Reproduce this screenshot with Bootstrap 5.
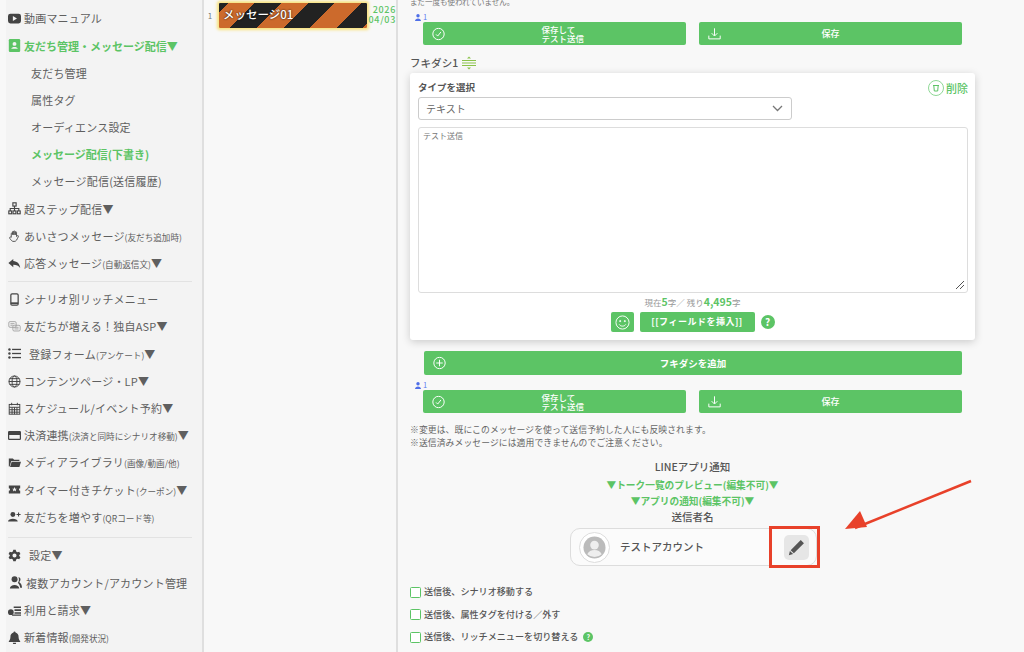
<!DOCTYPE html>
<html lang="ja"><head><meta charset="utf-8">
<link href="https://cdn.jsdelivr.net/npm/bootstrap@5.3.0/dist/css/bootstrap.min.css" rel="stylesheet">
<style>
html,body{height:652px;overflow:hidden;background:#f8f8f8}
body{font-family:"Noto Sans CJK JP","Liberation Sans",sans-serif;color:#555;font-size:11px;position:relative}
.shell{height:652px;overflow:hidden}
.side{flex:none;background:#f3f3f3;border-right:2px solid #dfdfdf;margin-left:6px;width:198px;padding-top:5px}
.mi{height:27.2px;display:flex;align-items:center;font-size:11px;color:#5f5f5f;white-space:nowrap;gap:3px;letter-spacing:.2px}
.mi svg{width:13px;height:13px;flex:none;margin-left:2px;fill:#444}
.mi small{font-size:8.6px;letter-spacing:0}
.mi.sub{padding-left:25px}
.mi.gr{letter-spacing:0;color:#5cc465}
.gr{color:#5cc465;font-weight:700}
.sep{border-top:1px solid #e2e2e2;margin:4px 0 4px 2px;width:184px}
.sep.lower{margin-top:6.5px}
.mid{width:194px;flex:none;border-right:2px solid #dfdfdf;background:#f8f8f8;padding-top:3px}
.mnum{width:12px;text-align:center;font-size:8px;color:#777;margin-right:3px;padding-top:7px}
.stripe{width:148px;height:25px;border-radius:1px;box-shadow:0 0 3px 2px #f8e27e;background:repeating-linear-gradient(135deg,#222 -12.4px 6.4px,#cc6a2c 6.4px 25.3px);color:#fff;font-size:11.5px;font-weight:500;padding:3px 0 0 4px;text-shadow:0 0 2px #000}
.mdate{font-size:9px;line-height:10px;color:#5cc465;font-weight:500;padding-top:2px;text-align:right;width:29px;letter-spacing:.7px;white-space:nowrap}
.mainc{flex:1;min-width:0;padding-left:12px;position:relative}
.topnote{font-size:7.5px;height:4px;line-height:3px;color:#777;display:flex;width:565px}
.cnt{font-size:7.5px;height:10px;line-height:10px;color:#5a7af0;padding-left:5px;display:flex;align-items:center;gap:2px}
.btnrow{display:flex;gap:13px;padding-left:13px;width:565px}
.gbtn{background:#5cc465;border:0;border-radius:2px;color:#fff;height:23px;width:263px;display:flex;align-items:center;justify-content:center;position:relative;font-size:9px;line-height:9px;font-weight:500;padding:0;text-align:center}
.gbtn svg{position:absolute;left:9px;top:50%;transform:translateY(-50%);width:13px;height:13px;fill:none;stroke:#fff;stroke-width:1.2}
.gbtn .ctext{width:44px;text-align:left;margin-left:18px;font-size:8.5px}
.flabel{font-size:10.5px;font-weight:500;color:#555;height:28px;display:flex;align-items:center;gap:3px;padding-top:8px;line-height:1}
.panel{width:565px;height:267px;background:#fff;border-radius:3px;box-shadow:0 2px 8px rgba(0,0,0,.18);padding:8px;position:relative}
.plabel{font-size:9.5px;font-weight:700;color:#555;line-height:12px;margin-bottom:4px}
.sel{width:374px;height:23px;border:1px solid #ccc;border-radius:3px;font-size:10px;color:#666;padding:0 8px 0 7px;display:flex;align-items:center;justify-content:space-between;background:#fff}
.ta{width:550px;height:166px;border:1px solid #ddd;border-radius:3px;margin-top:7px;font-size:8px;color:#777;padding:1px 4px;position:relative;line-height:14px}
.grip{position:absolute;right:2px;bottom:2px;width:10px;height:10px}
.del{position:absolute;right:7px;top:7px;display:flex;align-items:center;gap:2px;color:#5cc465;font-size:11px;font-weight:500}
.ccount{text-align:center;font-size:8.5px;color:#999;height:19px;line-height:18px}
.ccount b{font-size:10.5px;color:#5cc465;font-weight:700}
.tools{display:flex;justify-content:center;gap:6px;align-items:center}
.tsmile{width:23px;height:20px;background:#5cc465;border-radius:2px;display:flex;align-items:center;justify-content:center}
.tfield{width:115px;height:20px;background:#5cc465;border-radius:2px;color:#fff;font-size:9px;font-weight:700;text-align:center;line-height:20px;letter-spacing:.5px}
.qm{width:14px;height:14px;border-radius:50%;background:#5cc465;color:#fff;font-size:10px;font-weight:700;line-height:14px;text-align:center}
.addw{padding-left:14px;margin-top:11px;margin-bottom:5px}
.addb{width:538px;height:24px;font-size:9.5px;font-weight:700}
.notes{font-size:8.8px;line-height:13px;color:#666;margin-top:10px;letter-spacing:.1px;white-space:nowrap}
.ctr{width:565px;text-align:center}
.h1t{font-size:10.5px;font-weight:500;color:#555;line-height:14px;margin-top:11px}
.gl{font-size:9.7px;font-weight:700;color:#5cc465;line-height:16px}
.h2t{font-size:10.5px;font-weight:500;color:#555;line-height:16px}
.pill{margin-left:160px;margin-top:3px;width:247px;height:38px;border:1px solid #ddd;border-radius:10px;background:#fbfbfb;display:flex;align-items:center;padding:0 9px 0 8px;font-size:10.5px;font-weight:500;color:#555;gap:10px}
.ava{width:31px;height:31px;flex:none;border-radius:50%;border:1px solid #ddd;background:#fff;display:flex;align-items:center;justify-content:center}
.pen{margin-left:auto;width:25px;height:25px;border-radius:5px;background:#e6e6e6;display:flex;align-items:center;justify-content:center;margin-right:-2px}
.chks{margin-top:15px}
.chk{display:flex;align-items:center;gap:3px;height:22.5px;font-size:9.1px;font-weight:500;color:#555}
.box{width:11px;height:11px;border:1.5px solid #5cc465;border-radius:1.5px;background:#fff;flex:none}
.mq{width:10px;height:10px;border-radius:50%;background:#5cc465;color:#fff;font-size:7px;line-height:10px;text-align:center;font-weight:700;margin-left:2px}
.redbox{position:absolute;left:769px;top:526px;width:51px;height:42px;border:3px solid #e8412a;pointer-events:none}
.arrow{position:absolute;left:840px;top:478px;width:135px;height:60px;pointer-events:none}
</style></head><body>
<div class="shell d-flex">
<nav class="side">
<div class="mi"><svg viewBox="0 0 16 16"><rect x="0" y="2" width="16" height="12" rx="3"/><path d="M6 5l5 3-5 3z" fill="#f3f3f3"/></svg>動画マニュアル</div>
<div class="mi gr"><svg viewBox="0 0 16 16" style="fill:#5cc465"><rect x="1" y="0" width="14" height="16" rx="1.5"/><circle cx="8" cy="6" r="2.4" fill="#f3f3f3"/><path d="M4 12c.5-3 7.500-3 8 0z" fill="#f3f3f3"/></svg>友だち管理・メッセージ配信▼</div>
<div class="mi sub">友だち管理</div>
<div class="mi sub">属性タグ</div>
<div class="mi sub">オーディエンス設定</div>
<div class="mi sub gr">メッセージ配信(下書き)</div>
<div class="mi sub">メッセージ配信(送信履歴)</div>
<div class="mi"><svg viewBox="0 0 16 16" style="fill:none;stroke:#444;stroke-width:1.4"><rect x="6" y="1" width="4" height="4"/><rect x="1" y="11" width="3.500" height="3.500"/><rect x="6.200" y="11" width="3.500" height="3.500"/><rect x="11.500" y="11" width="3.500" height="3.500"/><path d="M8 5v6M2.700 11V8h10.600v3"/></svg>超ステップ配信▼</div>
<div class="mi"><svg viewBox="0 0 16 16" style="fill:none;stroke:#444;stroke-width:1.100"><path d="M4 9V4.500c0-1.200 1.500-1.200 1.500 0M5.500 6V2.500c0-1.200 1.700-1.200 1.700 0V6M7.200 6V2.200c0-1.200 1.700-1.200 1.700 0V6M8.900 6V3c0-1.200 1.600-1.200 1.600 0v5c1-1.500 2.800-1.300 2.300 0-.8 1.500-1.300 3-2.300 4.500-1 2-5 2.200-6.300.3C3 11.500 2 10.500 2 9.500c0-1 1.500-1 2-.5"/></svg><span>あいさつメッセージ<small>(友だち追加時)</small></span></div>
<div class="mi"><svg viewBox="0 0 16 16"><path d="M6.500 2.500L0.500 7.500l6 5V9.500c4 0 6.500 1 8.500 4-.5-5-3.500-8-8.500-8.500z"/></svg><span>応答メッセージ<small>(自動返信文)</small>▼</span></div>
<div class="sep"></div>
<div class="mi"><svg viewBox="0 0 16 16" style="fill:none;stroke:#444;stroke-width:1.500"><rect x="3.500" y="1" width="9" height="14" rx="1.500"/><path d="M3.500 12.500h9" stroke-width="2"/></svg>シナリオ別リッチメニュー</div>
<div class="mi"><svg viewBox="0 0 16 16" style="fill:none;stroke:#999;stroke-width:1"><rect x="1" y="2" width="9" height="7" rx="1.500"/><rect x="6" y="6.500" width="9" height="7" rx="1.500"/><path d="M3 4.500h5M3 6.500h3M8 9h5M8 11h5"/></svg>友だちが増える！独自ASP▼</div>
<div class="mi"><svg viewBox="0 0 16 16"><circle cx="1.800" cy="3" r="1.500"/><circle cx="1.800" cy="8" r="1.500"/><circle cx="1.800" cy="13" r="1.500"/><rect x="5" y="2.200" width="11" height="1.600"/><rect x="5" y="7.200" width="11" height="1.600"/><rect x="5" y="12.200" width="11" height="1.600"/></svg><span style="margin-left:5px">登録フォーム<small>(アンケート)</small>▼</span></div>
<div class="mi"><svg viewBox="0 0 16 16" style="fill:none;stroke:#444;stroke-width:1.200"><circle cx="8" cy="8" r="6.800"/><ellipse cx="8" cy="8" rx="3" ry="6.800"/><path d="M1 8h14M2 4.500h12M2 11.500h12"/></svg>コンテンツページ・LP▼</div>
<div class="mi"><svg viewBox="0 0 16 16" style="fill:none;stroke:#444;stroke-width:1.200"><rect x="1.500" y="3" width="13" height="12"/><path d="M1.500 6.500h13M1.500 9.500h13M1.500 12.500h13M5 6.500V15M8 6.500V15M11 6.500V15M4.500 1v3M11.500 1v3" /></svg>スケジュール/イベント予約▼</div>
<div class="mi"><svg viewBox="0 0 16 16"><path fill-rule="evenodd" d="M1.500 2.500h13a1.500 1.500 0 0 1 1.500 1.500v8a1.500 1.500 0 0 1-1.500 1.500h-13A1.500 1.500 0 0 1 0 12V4a1.500 1.500 0 0 1 1.500-1.500zM1.500 7.500v4.500h13V7.500z"/></svg><span>決済連携<small>(決済と同時にシナリオ移動)</small>▼</span></div>
<div class="mi"><svg viewBox="0 0 16 16"><path d="M1 13V3h5l1.500 1.500H14V6H4L2 13zM4.500 7H16l-2 6.500H2.500z"/></svg><span>メディアライブラリ<small>(画像/動画/他)</small></span></div>
<div class="mi"><svg viewBox="0 0 16 16"><path fill-rule="evenodd" d="M1 3h14v3.500a1.500 1.500 0 0 0 0 3V13H1V9.500a1.500 1.500 0 0 0 0-3zM8 5l.9 2H11L9.400 8.400 10 10.500 8 9.300 6 10.500l.6-2.100L5 7h2.100z"/></svg><span>タイマー付きチケット<small>(クーポン)</small>▼</span></div>
<div class="mi"><svg viewBox="0 0 16 16"><circle cx="6" cy="5.500" r="3"/><path d="M0 14c.3-4.500 11.700-4.500 12 0z"/><path d="M13 3v5M10.500 5.500h5" stroke="#444" stroke-width="1.300"/></svg><span>友だちを増やす<small>(QRコード等)</small></span></div>
<div class="sep lower"></div>
<div class="mi"><svg viewBox="0 0 16 16"><path fill-rule="evenodd" d="M6.500 1h3l.5 2 1.800 1 2-.6 1.500 2.600-1.500 1.400v1.200l1.500 1.400-1.500 2.600-2-.6-1.800 1-.5 2h-3l-.5-2-1.800-1-2 .6L.700 10l1.500-1.400V7.400L.7 6l1.500-2.600 2 .6L6 3zM8 5.500a2.500 2.500 0 1 0 0 5 2.500 2.500 0 0 0 0-5z"/></svg><span style="margin-left:5px">設定▼</span></div>
<div class="mi"><svg viewBox="0 0 16 16" style="width:15px;height:15px"><circle cx="7" cy="4.500" r="3.200"/><path d="M2 14.500c0-5 10-5 10 0zM11 2.500c3 0 3 4 .8 5 1.800 1 3 3 3.200 6h-2c-.3-2-1-4-2.500-5 1.500-1.500 1.500-4.500.5-6z"/></svg><span>複数アカウント/アカウント管理</span></div>
<div class="mi"><svg viewBox="0 0 16 16"><circle cx="3.500" cy="10" r="3.500"/><path d="M7 3h9v2H7zM8 6.500h8v2H8zM8 10h8v2H8zM5 13h11v1.500H5z"/></svg>利用と請求▼</div>
<div class="mi"><svg viewBox="0 0 16 16"><path d="M8 0.500a1.200 1.200 0 0 1 1.200 1.300C12 2.500 13 4.700 13 7c0 3 1 4.500 2 5.500v1H1v-1c1-1 2-2.500 2-5.500 0-2.300 1-4.500 3.800-5.200A1.200 1.200 0 0 1 8 .5zM6 14.500h4a2 2 0 0 1-4 0z"/></svg><span>新着情報<small>(開発状況)</small></span></div>
</nav>
<aside class="mid d-flex align-items-start">
<div class="mnum">1</div>
<div class="stripe">メッセージ01</div>
<div class="mdate">2026<br>04/03</div>
</aside>
<main class="mainc">
<div class="topnote"><span>まだ一度も使われていません。</span></div>
<div style="height:8px"></div>
<div class="cnt"><svg width="6" height="7" viewBox="0 0 6 7" fill="#4f6fe8"><circle cx="3" cy="1.800" r="1.700"/><path d="M0 7c0-3.500 6-3.500 6 0z"/></svg>1</div>
<div class="btnrow">
<button class="gbtn"><svg viewBox="0 0 16 16"><circle cx="8" cy="8" r="7"/><path d="M5 8.500l2 2 4-5"/></svg><span class="ctext">保存して<br>テスト送信</span></button>
<button class="gbtn"><svg viewBox="0 0 16 16"><path d="M8 1v9M4.500 7L8 10.500 11.500 7M1 10v4h14v-4"/></svg>保存</button>
</div>
<div class="flabel">フキダシ1 <svg width="16" height="14" viewBox="0 0 16 14" fill="none" stroke="#8bc34a"><path d="M1 4.500h14M1 7h14M1 9.500h14"/><path d="M6 2.500L8 .5l2 2zM6 11.500l2 2 2-2z" fill="#8bc34a" stroke="none"/></svg></div>
<section class="panel">
<div class="plabel">タイプを選択</div>
<div class="sel">テキスト<svg width="11" height="7" viewBox="0 0 11 7" fill="none" stroke="#777" stroke-width="1.300"><path d="M1 1l4.500 4.500L10 1"/></svg></div>
<div class="ta">テスト送信<svg class="grip" viewBox="0 0 10 10" stroke="#555" fill="none"><path d="M1 9L9 1M5 9l4-4"/></svg></div>
<div class="del"><svg width="16" height="16" viewBox="0 0 16 16" fill="none" stroke="#8fd896"><circle cx="8" cy="8" r="7.500"/><path d="M5 5.500h6M5.800 5.500l.5 5.500h3.400l.5-5.500" stroke="#5cc465"/></svg>削除</div>
<div class="ccount">現在<b>5</b>字／ 残り<b>4,495</b>字</div>
<div class="tools">
<div class="tsmile"><svg width="15" height="15" viewBox="0 0 16 16" fill="none" stroke="#fff"><circle cx="8" cy="8" r="7"/><circle cx="5.500" cy="6.500" r=".6" fill="#fff"/><circle cx="10.500" cy="6.500" r=".6" fill="#fff"/><path d="M4.500 10c1.500 2.500 5.500 2.500 7 0"/></svg></div>
<div class="tfield">[[フィールドを挿入]]</div>
<div class="qm">?</div>
</div>
</section>
<div class="addw"><button class="gbtn addb"><svg viewBox="0 0 16 16"><circle cx="8" cy="8" r="7"/><path d="M8 4v8M4 8h8"/></svg>フキダシを追加</button></div>
<div class="cnt"><svg width="6" height="7" viewBox="0 0 6 7" fill="#4f6fe8"><circle cx="3" cy="1.800" r="1.700"/><path d="M0 7c0-3.500 6-3.500 6 0z"/></svg>1</div>
<div class="btnrow">
<button class="gbtn"><svg viewBox="0 0 16 16"><circle cx="8" cy="8" r="7"/><path d="M5 8.500l2 2 4-5"/></svg><span class="ctext">保存して<br>テスト送信</span></button>
<button class="gbtn"><svg viewBox="0 0 16 16"><path d="M8 1v9M4.500 7L8 10.500 11.500 7M1 10v4h14v-4"/></svg>保存</button>
</div>
<div class="notes">※変更は、既にこのメッセージを使って送信予約した人にも反映されます。<br>※送信済みメッセージには適用できませんのでご注意ください。</div>
<div class="ctr h1t">LINEアプリ通知</div>
<div class="ctr gl" style="margin-top:3px">▼トーク一覧のプレビュー(編集不可)▼</div>
<div class="ctr gl">▼アプリの通知(編集不可)▼</div>
<div class="ctr h2t">送信者名</div>
<div class="pill"><span class="ava"><svg width="23" height="23" viewBox="0 0 24 24"><circle cx="12" cy="12" r="11.500" fill="#bbb"/><circle cx="12" cy="9.500" r="4.500" fill="#eee"/><path d="M4.500 19c2-6 13-6 15 0a11 11 0 0 1-15 0z" fill="#eee"/></svg></span>テストアカウント<span class="pen"><svg width="17" height="17" viewBox="0 0 16 16" fill="#555"><path d="M12 1l3 3-9.500 9.500-3-3zM1.800 11.200l3 3L.8 15.200z"/></svg></span></div>
<div class="chks">
<div class="chk"><span class="box"></span>送信後、シナリオ移動する</div>
<div class="chk"><span class="box"></span>送信後、属性タグを付ける／外す</div>
<div class="chk"><span class="box"></span>送信後、リッチメニューを切り替える<span class="mq">?</span></div>
</div>
</main>
</div>
<div class="redbox"></div>
<svg class="arrow" viewBox="0 0 135 60"><path d="M131 3L15 50" stroke="#e8412a" stroke-width="2.500" fill="none"/><path d="M5 51L20 33l7 16z" fill="#e8412a"/></svg>
<script src="https://cdn.jsdelivr.net/npm/bootstrap@5.3.0/dist/js/bootstrap.bundle.min.js"></script>
</body></html>
